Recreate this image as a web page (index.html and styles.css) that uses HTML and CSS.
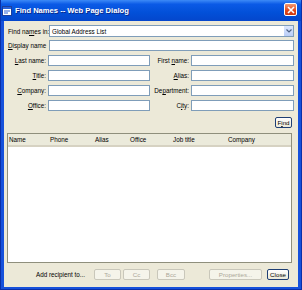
FILE: index.html
```html
<!DOCTYPE html>
<html lang="en">
<head>
  <meta charset="UTF-8" />
  <title>Find Names -- Web Page Dialog</title>
  <link rel="stylesheet" href="styles.css">
</head>
<body>
  <div class="window">
    <div class="titlebar">
      <svg class="app-icon" width="10" height="10" viewBox="0 0 10 10">
        <rect x="0.5" y="0.5" width="9" height="9" fill="#ffffff" stroke="#1c3f9c"/>
        <rect x="1" y="1" width="8" height="2" fill="#2a62d8"/>
        <path d="M2 5h6M2 7h4" stroke="#2a62d8" stroke-width="1"/>
      </svg>
      <span class="title">Find Names -- Web Page Dialog</span>
      <div class="close-box">
        <svg width="8" height="8" viewBox="0 0 8 8">
          <path d="M1 1L7 7M7 1L1 7" stroke="#ffffff" stroke-width="1.6"/>
        </svg>
      </div>
    </div>

    <div class="client">
      <!-- top rows -->
      <div class="line">
        <label class="lbl-left">Find na<u>m</u>es in:</label>
        <div class="select">
          <span>Global Address List</span>
          <div class="drop">
            <svg width="6" height="4" viewBox="0 0 6 4"><path d="M0.5 0.5L3 3L5.5 0.5" fill="none" stroke="#4d6185" stroke-width="1.2"/></svg>
          </div>
        </div>
      </div>
      <div class="line">
        <label class="lbl-left"><u>D</u>isplay name</label>
        <div class="field"></div>
      </div>

      <div class="grid">
        <label class="lbl"><u>L</u>ast name:</label>
        <div class="field"></div>
        <label class="lbl">First <u>n</u>ame:</label>
        <div class="field"></div>

        <label class="lbl"><u>T</u>itle:</label>
        <div class="field"></div>
        <label class="lbl"><u>A</u>lias:</label>
        <div class="field"></div>

        <label class="lbl"><u>C</u>ompany:</label>
        <div class="field"></div>
        <label class="lbl">De<u>p</u>artment:</label>
        <div class="field"></div>

        <label class="lbl"><u>O</u>ffice:</label>
        <div class="field"></div>
        <label class="lbl">C<u>i</u>ty:</label>
        <div class="field"></div>
      </div>

      <div class="find-row">
        <button class="xp-btn find">F<u>i</u>nd</button>
      </div>

      <!-- results list -->
      <div class="list">
        <div class="list-head">
          <span class="col c-name">Name</span>
          <span class="col c-phone">Phone</span>
          <span class="col c-alias">Alias</span>
          <span class="col c-office">Office</span>
          <span class="col c-job">Job title</span>
          <span class="col c-company">Company</span>
        </div>
      </div>

      <div class="bottom">
        <span class="add-label">Add recipient to...</span>
        <button class="xp-btn off b-to">To</button>
        <button class="xp-btn off b-cc">Cc</button>
        <button class="xp-btn off b-bcc">Bcc</button>
        <button class="xp-btn off b-props">Properties...</button>
        <button class="xp-btn b-close">Close</button>
      </div>
    </div>
  </div>
</body>
</html>
```

FILE: styles.css
```css
body {
  margin: 0;
  font-family: "Liberation Sans", Arial, sans-serif;
  font-size: 6.3px;
  color: #000;
  background: #ffffff;
}

.window {
  width: 302px;
  height: 290px;
  display: flex;
  flex-direction: column;
  background: #1651db;
  border-left: 1px solid #0a2fa8;
  border-right: 1px solid #0a2fa8;
  border-bottom: 1px solid #0a2fa8;
  box-sizing: border-box;
}

.titlebar {
  height: 21px;
  display: flex;
  align-items: center;
  padding: 0 4px 0 1px;
  background: linear-gradient(#3d8af7 0%, #0b5ae6 20%, #0250d8 60%, #0446cc 100%);
}

.app-icon {
  margin-right: 3px;
}

.title {
  flex: 1;
  color: #ffffff;
  font-weight: bold;
  font-size: 7.6px;
  text-shadow: 1px 1px 0 #0a2a8a;
}

.close-box {
  width: 13px;
  height: 13px;
  border: 1px solid #ffffff;
  border-radius: 2px;
  background: linear-gradient(#f39a72, #e2461a 60%, #cf3a12);
  display: flex;
  align-items: center;
  justify-content: center;
  box-sizing: border-box;
  margin-top: -2px;
}

.client {
  flex: 1;
  margin: 0 3px 2px 3px;
  background: #ece9d8;
  padding: 4px 4px 0 4px;
  display: flex;
  flex-direction: column;
}

.line {
  display: flex;
  align-items: center;
  margin-bottom: 3px;
}

.lbl-left {
  width: 41px;
  white-space: nowrap;
}

.select,
.field {
  height: 11px;
  background: #ffffff;
  border: 1px solid #7f9db9;
  box-sizing: border-box;
}

.select {
  flex: 1;
  height: 12px;
  display: flex;
  align-items: center;
  padding-left: 2px;
}

.select span {
  flex: 1;
}

.drop {
  width: 9px;
  height: 10px;
  background: linear-gradient(#dce7fd, #b9cdf7);
  border-left: 1px solid #ffffff;
  display: flex;
  align-items: center;
  justify-content: center;
}

.line .field {
  flex: 1;
}

.grid {
  display: grid;
  grid-template-columns: 38px 102px 37px 1fr;
  column-gap: 2px;
  row-gap: 4px;
  margin-top: 1px;
  align-items: center;
}

.lbl {
  text-align: right;
  white-space: nowrap;
}

.find-row {
  display: flex;
  justify-content: flex-end;
  margin-top: 6px;
  padding-right: 2px;
}

.xp-btn {
  font-family: "Liberation Sans", Arial, sans-serif;
  font-size: 6.2px;
  height: 11px;
  padding: 0 1px;
  background: linear-gradient(#ffffff, #ece9d8);
  border: 1px solid #1f3f74;
  border-radius: 2px;
  color: #000;
  line-height: 9px;
}

.xp-btn.off {
  border-color: #c9c7ba;
  color: #aca899;
  background: #f5f4ea;
}

.find {
  width: 17px;
}

.list {
  margin: 5px 2px 0 -1px;
  height: 130px;
  background: #ffffff;
  border: 1px solid #8f8f7c;
  box-sizing: border-box;
}

.list-head {
  height: 13px;
  display: flex;
  align-items: center;
  background: #ebeadb;
  border-bottom: 2px solid #d6d2c2;
  box-sizing: border-box;
}

.col {
  white-space: nowrap;
  box-sizing: border-box;
}

.c-name { width: 42px; padding-left: 1px; }
.c-phone { width: 45px; }
.c-alias { width: 35px; }
.c-office { width: 43px; }
.c-job { width: 55px; }
.c-company { flex: 1; }

.bottom {
  display: flex;
  align-items: center;
  margin-top: 6px;
}

.add-label {
  margin-left: 28px;
  margin-right: 9px;
}

.b-to,
.b-cc {
  width: 27px;
}

.b-to {
  margin-right: 2px;
}

.b-cc {
  margin-right: 7px;
}

.b-bcc {
  width: 28px;
}

.b-props {
  width: 53px;
  margin-left: 24px;
}

.b-close {
  width: 22px;
  margin-left: 5px;
}
```
